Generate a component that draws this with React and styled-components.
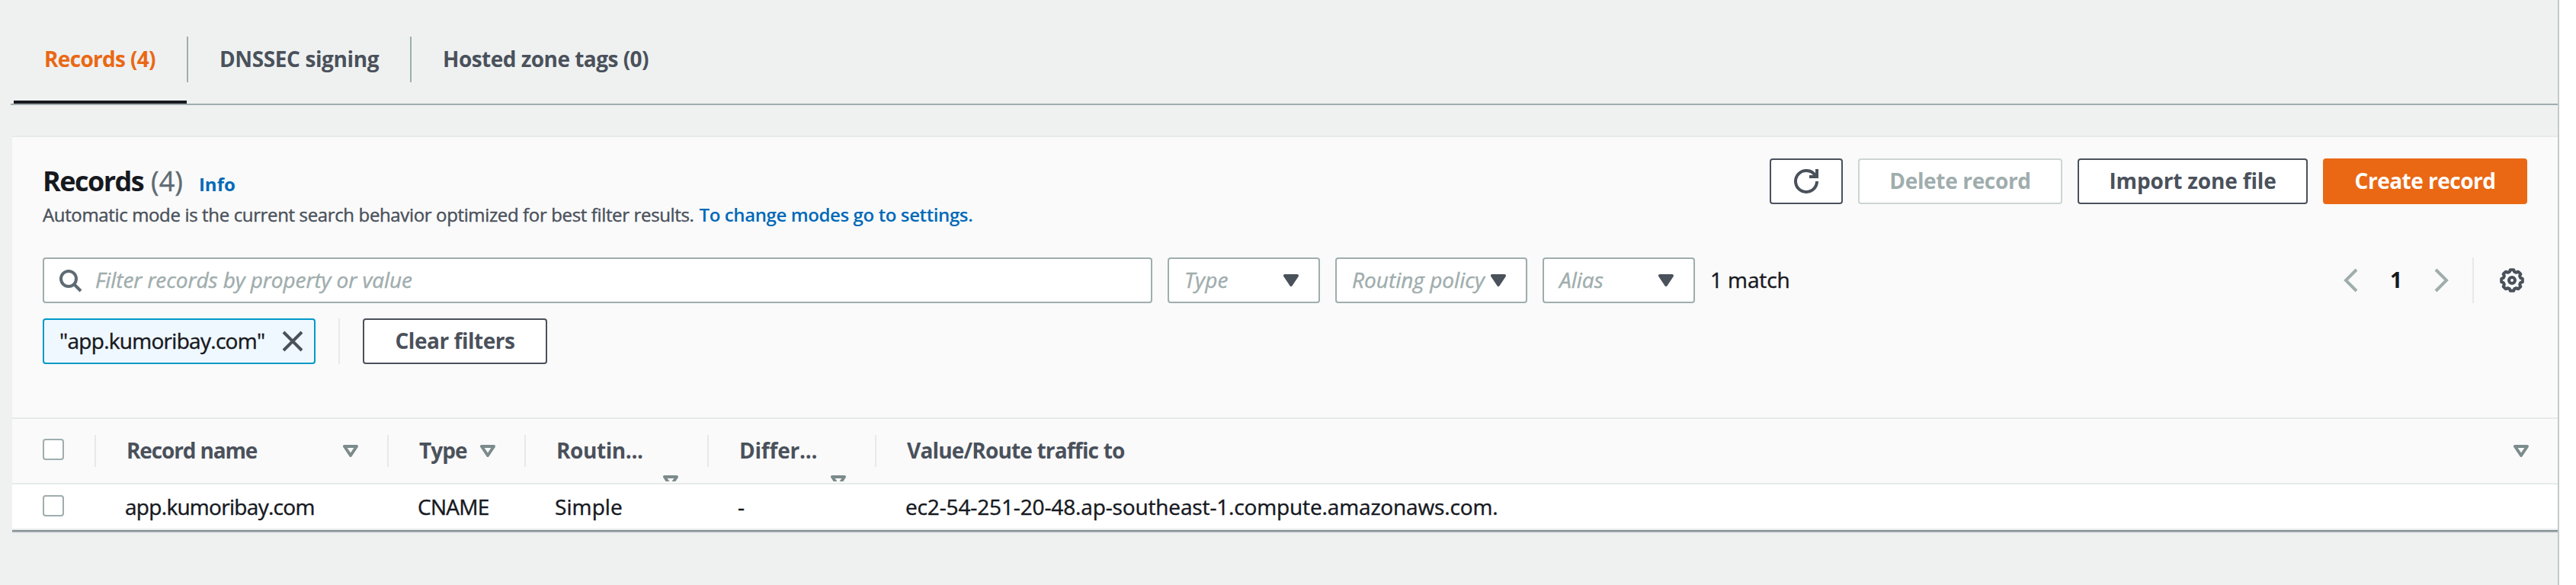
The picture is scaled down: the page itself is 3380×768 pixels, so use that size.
import React from "react";
import styled, { createGlobalStyle } from "styled-components";

const c = {
  page: "#eff1f1",
  panel: "#fafafa",
  ink: "#16191f",
  slate: "#4a515b",
  mute: "#5f6b73",
  border: "#9fadad",
  faint: "#e6eae9",
  link: "#0069b8",
  orange: "#ea6814",
};

const GlobalStyle = createGlobalStyle`
  * { box-sizing: border-box; }
  body {
    margin: 0;
    background: #fff;
    color: ${c.ink};
    font-family: "Open Sans", "Noto Sans", sans-serif;
    font-size: 28px;
    -webkit-text-stroke: 0.4px currentColor;
  }
  svg { display: block; flex: none; }
`;

const Page = styled.main`
  width: 3358px;
  height: 768px;
  overflow: hidden;
  background: ${c.page};
  border-right: 2px solid #c3caca;
`;

const Text = styled.span`
  white-space: nowrap;
  letter-spacing: ${(p) => p.$track || 0}px;
`;

const Tabs = styled.nav`
  display: flex;
  height: 138px;
  margin-left: 14px;
  padding: 48px 0 0 4px;
  border-bottom: 2px solid ${c.border};
`;

const Tab = styled.div`
  display: flex;
  width: ${(p) => p.$width}px;
  height: 88px;
  padding-left: ${(p) => p.$inset || 40}px;
  line-height: 58px;
  font-weight: 700;
  -webkit-text-stroke: 0;
  color: ${(p) => (p.$active ? c.orange : c.slate)};
  border-bottom: 4px solid ${(p) => (p.$active ? c.ink : "transparent")};
`;

const TabDivider = styled.div`
  width: 2px;
  height: 60px;
  background: ${c.border};
`;

const Panel = styled.section`
  margin: 40px 0 0 16px;
  border-top: 2px solid ${c.faint};
  background: ${c.panel};
`;

const Header = styled.header`
  display: flex;
  justify-content: space-between;
  height: 158px;
  padding: 28px 40px 0;
`;

const TitleBlock = styled.div`
  padding-top: 8px;
`;

const Title = styled.h2`
  display: flex;
  align-items: baseline;
  height: 48px;
  margin: 0;
  font-size: 36px;
  line-height: 44px;
  font-weight: 700;
  -webkit-text-stroke: 0;
`;

const Count = styled.span`
  margin-left: 10px;
  font-weight: 400;
  -webkit-text-stroke: 0.4px currentColor;
  color: ${c.mute};
`;

const InfoLink = styled.a`
  margin-left: 21px;
  font-size: 24px;
  color: ${c.link};
`;

const Description = styled.p`
  margin: 0;
  font-size: 24px;
  line-height: 36px;
  color: ${c.slate};
`;

const Link = styled.a`
  margin-left: 7px;
  font-weight: 600;
  -webkit-text-stroke: 0;
  color: ${c.link};
`;

const Actions = styled.div`
  display: flex;
  gap: 20px;
`;

const buttonColors = {
  normal: { edge: c.slate, fill: "#fff", text: c.slate },
  disabled: { edge: "#cdd5d4", fill: "#fff", text: c.border },
  primary: { edge: c.orange, fill: c.orange, text: "#fff" },
};

const Button = styled.button`
  display: flex;
  align-items: center;
  justify-content: center;
  width: ${(p) => p.$width}px;
  height: 60px;
  padding: 0 0 2px;
  border: 2px solid ${(p) => buttonColors[p.$kind || "normal"].edge};
  border-radius: 4px;
  background: ${(p) => buttonColors[p.$kind || "normal"].fill};
  color: ${(p) => buttonColors[p.$kind || "normal"].text};
  font: 700 28px/38px "Open Sans", "Noto Sans", sans-serif;
  -webkit-text-stroke: 0;
`;

const IconButton = styled(Button)`
  padding: 0;
`;

const FilterRow = styled.div`
  display: flex;
  align-items: center;
  padding: 0 44px 0 40px;
`;

const SearchBox = styled.div`
  display: flex;
  align-items: center;
  gap: 17px;
  width: 1456px;
  height: 60px;
  padding-left: 18px;
  border: 2px solid ${c.border};
  border-radius: 4px;
  background: #fff;
  color: ${c.mute};
`;

const Placeholder = styled(Text)`
  padding-bottom: 2px;
  line-height: 38px;
  font-style: italic;
  color: ${c.border};
`;

const Select = styled.div`
  display: flex;
  align-items: center;
  justify-content: space-between;
  width: ${(p) => p.$width}px;
  height: 60px;
  margin-left: 20px;
  padding: 0 26px 0 20px;
  border: 2px solid ${c.border};
  border-radius: 4px;
  background: #fff;
  color: ${c.slate};
`;

const Matches = styled.div`
  margin-left: 20px;
  padding-bottom: 2px;
  line-height: 38px;
`;

const Pager = styled.div`
  display: flex;
  align-items: center;
  margin: 0 24px 0 auto;
  color: ${c.border};
`;

const PageNumber = styled.b`
  width: 88px;
  padding-bottom: 2px;
  text-align: center;
  line-height: 38px;
  -webkit-text-stroke: 0;
  color: ${c.ink};
`;

const Divider = styled.div`
  flex: none;
  width: 2px;
  height: ${(p) => p.$height || 60}px;
  background: ${c.faint};
`;

const Settings = styled.div`
  margin-left: 34px;
  color: ${c.slate};
`;

const TokenRow = styled.div`
  display: flex;
  gap: 30px;
  padding: 20px 40px 70px;
`;

const Token = styled.div`
  display: flex;
  align-items: center;
  justify-content: space-between;
  width: 358px;
  height: 60px;
  padding: 0 12px 0 20px;
  border: 2px solid #0099c8;
  border-radius: 4px;
  background: #f0f8ff;
  line-height: 38px;
`;

const TokenLabel = styled(Text)`
  padding-bottom: 2px;
`;

const CloseIcon = styled.svg`
  color: ${c.slate};
`;

const Row = styled.div`
  display: grid;
  grid-template-columns: 110px 384px 180px 240px 220px 1fr;
`;

const HeadRow = styled(Row)`
  height: 88px;
  border-top: 2px solid ${c.faint};
  border-bottom: 2px solid ${c.faint};
  color: ${c.slate};
  font-weight: 700;
  -webkit-text-stroke: 0;
`;

const BodyRow = styled(Row)`
  height: 60px;
  border-bottom: 2px solid ${c.faint};
  background: #fff;
  line-height: 58px;
`;

const CheckCell = styled.div`
  padding: 14px 0 0 40px;
`;

const Checkbox = styled.span`
  display: block;
  width: 28px;
  height: 28px;
  border: 2px solid ${c.border};
  border-radius: 4px;
  background: #fff;
`;

const HeadCheckCell = styled.div`
  display: flex;
  justify-content: space-between;
  padding: 21px 0 0 40px;
`;

const HeadCheckbox = styled(Checkbox)`
  margin-top: 5px;
`;

const HeadCell = styled.div`
  display: flex;
  padding: 21px 0 0 40px;
`;

const HeadContent = styled.div`
  display: flex;
  flex: 1;
  flex-wrap: wrap;
  justify-content: space-between;
  align-content: flex-start;
  height: 60px;
  margin-top: 1px;
  padding-right: 38px;
  overflow: hidden;
`;

const HeadLabel = styled(Text)`
  flex: ${(p) => (p.$wrap ? "0 0 100%" : "none")};
  height: 40px;
  line-height: 38px;
`;

const SortIcon = styled.svg`
  margin: 12px 0 12px auto;
  color: #7c8b8b;
`;

const Cell = styled.div`
  padding-left: 38px;
`;

const PanelEdge = styled.div`
  height: 4px;
  margin-left: 16px;
  background: linear-gradient(#7d898e 0 1px, #8b969b 1px 2px, #c3c9cb 2px 3px, #e3e6e7 3px 4px);
`;

const stroke = { fill: "none", stroke: "currentColor", strokeWidth: 2 };

const Icon = ({ children }) => (
  <svg width="32" height="32" viewBox="0 0 16 16" {...stroke}>{children}</svg>
);

const Caret = () => (
  <svg width="20" height="16" viewBox="3 4 10 8" {...stroke} fill="currentColor" strokeLinejoin="round">
    <path d="M4 5h8l-4 6-4-6z" />
  </svg>
);

const Sort = () => (
  <SortIcon width="20" height="16" viewBox="3 4 10 8" {...stroke} strokeLinejoin="round">
    <path d="M4 5h8l-4 6-4-6z" />
  </SortIcon>
);

// Eight-toothed cog outline: each tooth is a flat top followed by a valley.
const gearPath = (() => {
  const pts = [];
  for (let i = 0; i < 8; i++) {
    [[-9, 7], [9, 7], [16, 5.8], [29, 5.8]].forEach(([a, r]) => {
      const t = ((i * 45 + a) * Math.PI) / 180;
      pts.push(`${(8 + r * Math.cos(t)).toFixed(2)} ${(8 + r * Math.sin(t)).toFixed(2)}`);
    });
  }
  return `M${pts.join("L")}Z`;
})();

const columns = [
  { label: "Record name", track: -1.15, value: "app.kumoribay.com", vTrack: -0.7 },
  { label: "Type", track: -0.95, value: "CNAME", vTrack: -0.7 },
  { label: "Routin...", track: -0.41, wrap: true, value: "Simple", vTrack: 0.1 },
  { label: "Differ...", track: -0.2, wrap: true, value: "-" },
  { label: "Value/Route traffic to", track: -0.82, value: "ec2-54-251-20-48.ap-southeast-1.compute.amazonaws.com.", vTrack: -0.14 },
];

export default function App() {
  return (
    <>
      <GlobalStyle />
      <Page>
        <Tabs>
          <Tab $active $width={227}><Text $track={-0.68}>Records (4)</Text></Tab>
          <TabDivider />
          <Tab $width={291} $inset={41}><Text $track={-0.39}>DNSSEC signing</Text></Tab>
          <TabDivider />
          <Tab $width={400} $inset={41}><Text $track={-0.53}>Hosted zone tags (0)</Text></Tab>
        </Tabs>
        <Panel>
          <Header>
            <TitleBlock>
              <Title>
                <Text $track={-1.54}>Records</Text>
                <Count>(4)</Count>
                <InfoLink>Info</InfoLink>
              </Title>
              <Description>
                <Text $track={-0.36}>Automatic mode is the current search behavior optimized for best filter results.</Text>
                <Link><Text $track={-0.39}>To change modes go to settings.</Text></Link>
              </Description>
            </TitleBlock>
            <Actions>
              <IconButton $width={96} aria-label="Refresh">
                <Icon>
                  <path d="M10 5h5V0" />
                  <path d="M15 8a6.957 6.957 0 0 1-7 7 6.957 6.957 0 0 1-7-7 6.957 6.957 0 0 1 7-7 6.87 6.87 0 0 1 6.3 4" />
                </Icon>
              </IconButton>
              <Button $kind="disabled" $width={268}><Text $track={-0.34}>Delete record</Text></Button>
              <Button $width={302}><Text $track={-0.16}>Import zone file</Text></Button>
              <Button $kind="primary" $width={268}><Text $track={-0.51}>Create record</Text></Button>
            </Actions>
          </Header>
          <FilterRow>
            <SearchBox>
              <Icon>
                <circle cx="7" cy="7" r="5" />
                <path d="m15 15-4.5-4.5" />
              </Icon>
              <Placeholder $track={-0.09}>Filter records by property or value</Placeholder>
            </SearchBox>
            <Select $width={200}><Placeholder $track={0.15}>Type</Placeholder><Caret /></Select>
            <Select $width={252}><Placeholder>Routing policy</Placeholder><Caret /></Select>
            <Select $width={200}><Placeholder>Alias</Placeholder><Caret /></Select>
            <Matches><Text $track={-0.11}>1 match</Text></Matches>
            <Pager>
              <Icon><path d="M12 1 5 8l7 7" /></Icon>
              <PageNumber>1</PageNumber>
              <Icon><path d="m4 1 7 7-7 7" /></Icon>
            </Pager>
            <Divider />
            <Settings>
              <Icon>
                <path d={gearPath} strokeLinejoin="round" />
                <circle cx="8" cy="8" r="2" />
              </Icon>
            </Settings>
          </FilterRow>
          <TokenRow>
            <Token>
              <TokenLabel $track={-0.71}>"app.kumoribay.com"</TokenLabel>
              <CloseIcon width="32" height="32" viewBox="0 0 16 16" {...stroke}>
                <path d="m2 2 12 12M14 2 2 14" />
              </CloseIcon>
            </Token>
            <Divider />
            <Button $width={242}><Text $track={-0.47}>Clear filters</Text></Button>
          </TokenRow>
          <HeadRow>
            <HeadCheckCell>
              <HeadCheckbox />
              <Divider $height={42} />
            </HeadCheckCell>
            {columns.map((col, i) => (
              <HeadCell key={col.label}>
                <HeadContent>
                  <HeadLabel $track={col.track} $wrap={col.wrap}>{col.label}</HeadLabel>
                  <Sort />
                </HeadContent>
                {i < columns.length - 1 && <Divider $height={42} />}
              </HeadCell>
            ))}
          </HeadRow>
          <BodyRow>
            <CheckCell><Checkbox /></CheckCell>
            {columns.map((col) => (
              <Cell key={col.label}><Text $track={col.vTrack}>{col.value}</Text></Cell>
            ))}
          </BodyRow>
        </Panel>
        <PanelEdge />
      </Page>
    </>
  );
}
